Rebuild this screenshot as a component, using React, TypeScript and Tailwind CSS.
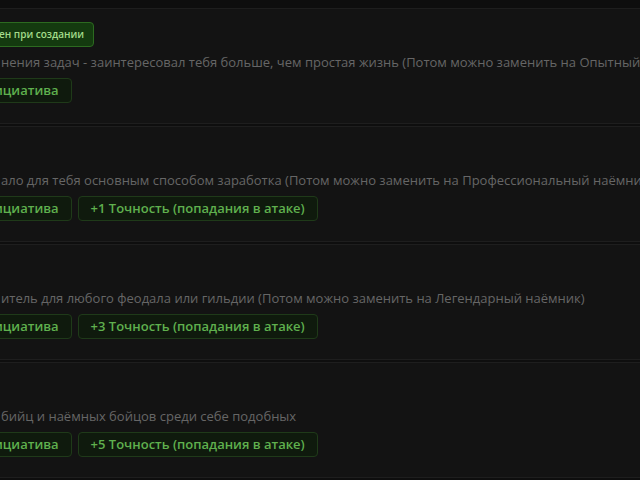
const cards = [
  {
    badge: "ен при создании",
    text: "нения задач - заинтересовал тебя больше, чем простая жизнь (Потом можно заменить на Опытный наёмник)",
    tags: ["ициатива"],
  },
  {
    badge: null,
    text: "ало для тебя основным способом заработка (Потом можно заменить на Профессиональный наёмник)",
    tags: ["ициатива", "+1 Точность (попадания в атаке)"],
  },
  {
    badge: null,
    text: "итель для любого феодала или гильдии (Потом можно заменить на Легендарный наёмник)",
    tags: ["ициатива", "+3 Точность (попадания в атаке)"],
  },
  {
    badge: null,
    text: "бийц и наёмных бойцов среди себе подобных",
    tags: ["ициатива", "+5 Точность (попадания в атаке)"],
  },
];

export default function App() {
  return (
    <div
      className="w-[640px] h-[480px] overflow-hidden bg-[#0e0e0e] pt-[8px]"
      style={{ fontFamily: '"Open Sans", "Noto Sans", sans-serif' }}
    >
      <div className="flex flex-col gap-[2px] -ml-[12px] w-[700px]">
        {cards.map((card, i) => (
          <div
            key={i}
            className="bg-[#131313] border border-[#1e1e1e] rounded-md pl-[12px] pt-[13px] pb-[20px]"
          >
            <div className="h-[24px] flex items-center">
              {card.badge && (
                <span className="h-[25px] flex items-center -ml-[15px] pl-[12px] pr-[9px] rounded-[4px] bg-[#143a0f] border border-[#2c6a20] text-[#a3dc8a] text-[10px] font-semibold">
                  {card.badge}
                </span>
              )}
            </div>
            <p className="mt-[8px] h-[16px] leading-[16px] text-[13px] text-[#666666] whitespace-nowrap">
              {card.text}
            </p>
            <div className="mt-[8px] flex gap-[6px]">
              {card.tags.map((t, j) => (
                <span
                  key={j}
                  className={`h-[25px] flex items-center rounded-[4px] bg-[#0f1a0d] border border-[#1f3a19] text-[#5fb04e] text-[13px] font-semibold ${
                    j === 0 ? "-ml-[20px] pl-[12px] pr-[12px]" : "px-[12px]"
                  }`}
                >
                  {t}
                </span>
              ))}
            </div>
          </div>
        ))}
      </div>
    </div>
  );
}
